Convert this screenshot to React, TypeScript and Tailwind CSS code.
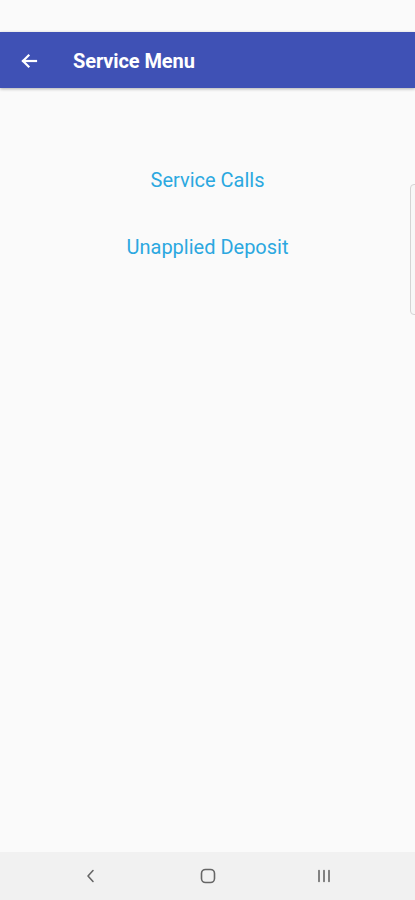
import React from 'react';

export default function App() {
  return (
    <div className="w-[415px] h-[900px] flex flex-col bg-[#fafafa] overflow-hidden relative" style={{ fontFamily: 'Roboto, "Liberation Sans", sans-serif' }}>
      {/* status bar */}
      <div className="h-[32px] bg-[#fafafa] shrink-0" />

      {/* app bar */}
      <div className="h-[56px] bg-[#3f51b5] flex items-center shrink-0 shadow-[0_1px_3px_rgba(0,0,0,0.3)]">
        <svg width="24" height="24" viewBox="0 0 24 24" className="ml-[17px] mt-[2px]" fill="none" stroke="#ffffff" strokeWidth="2.2" strokeLinecap="square">
          <path d="M19 12H6" />
          <path d="M11.5 6.5L6 12l5.5 5.5" />
        </svg>
        <span className="ml-[32px] mt-[2px] text-white text-[20px] font-bold tracking-[-0.1px]">Service Menu</span>
      </div>

      {/* content */}
      <div className="flex-1 flex flex-col items-center pt-[80px] gap-[43px]">
        <button className="text-[#2ba8e0] text-[20px] leading-[24px]">Service Calls</button>
        <button className="text-[#2ba8e0] text-[20px] leading-[24px]">Unapplied Deposit</button>
      </div>

      {/* edge panel handle */}
      <div className="absolute right-[-4px] top-[184px] w-[9px] h-[131px] rounded-[4px] border border-[#d4d4d4] bg-[#f7f7f7]" />

      {/* nav bar */}
      <div className="h-[48px] bg-[#f1f1f1] shrink-0 flex items-center justify-between px-[82px]">
        <svg width="18" height="18" viewBox="0 0 18 18" fill="none" stroke="#666" strokeWidth="1.6" strokeLinecap="round" strokeLinejoin="round">
          <path d="M11 3.5L6 9l5 5.5" />
        </svg>
        <svg width="18" height="18" viewBox="0 0 18 18" fill="none" stroke="#666" strokeWidth="1.6">
          <rect x="2.5" y="2.5" width="13" height="13" rx="4" />
        </svg>
        <svg width="18" height="18" viewBox="0 0 18 18" fill="none" stroke="#666" strokeWidth="1.6" strokeLinecap="round">
          <path d="M4 3.5v11M9 3.5v11M14 3.5v11" />
        </svg>
      </div>
    </div>
  );
}
